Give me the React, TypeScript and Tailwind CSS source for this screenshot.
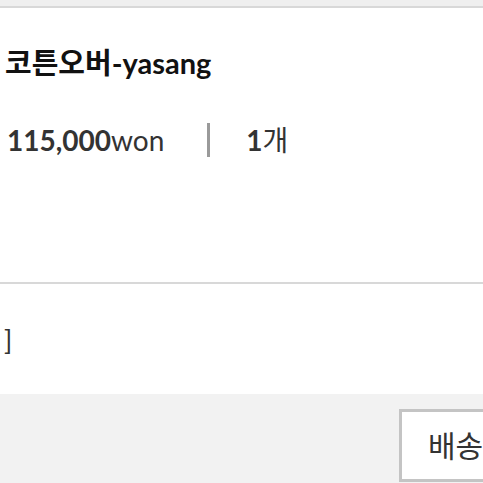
import React from 'react';

const font = { fontFamily: 'Lato, "Noto Sans CJK KR", sans-serif' };

export default function App() {
  return (
    <div className="w-[483px] h-[483px] overflow-hidden bg-[#f2f2f2]" style={font}>
      {/* top strip */}
      <div className="h-[6px] bg-[#efefef]" />

      {/* product panel */}
      <div className="h-[278px] bg-white border-t-2 border-b-2 border-[#d8d8d8] pl-[5px]">
        <h2 className="pt-[35px] text-[29px] font-bold leading-[40px] text-[#111] whitespace-nowrap">
          코튼오버-yasang
        </h2>
        <div className="mt-[39px] flex items-center text-[28px] text-[#333] leading-[36px] pl-[2px]">
          <span className="whitespace-nowrap">
            <span className="font-bold">115,000</span>won
          </span>
          <span className="ml-[43px] w-[3px] h-[34px] bg-[#9a9a9a]" />
          <span className="ml-[36px] whitespace-nowrap">
            <span className="font-bold">1</span>개
          </span>
        </div>
      </div>

      {/* option row */}
      <div className="h-[110px] bg-white flex items-center pl-[4px]">
        <span className="text-[27px] text-[#333] leading-none">]</span>
      </div>

      {/* footer */}
      <div className="flex justify-end pt-[15px]">
        <button className="w-[86px] h-[73px] -mr-[2px] bg-white border-[3px] border-r-0 border-[#c4c4c4] text-[30px] text-[#333] pl-[26px] text-left whitespace-nowrap overflow-hidden">
          배송비
        </button>
      </div>
    </div>
  );
}
